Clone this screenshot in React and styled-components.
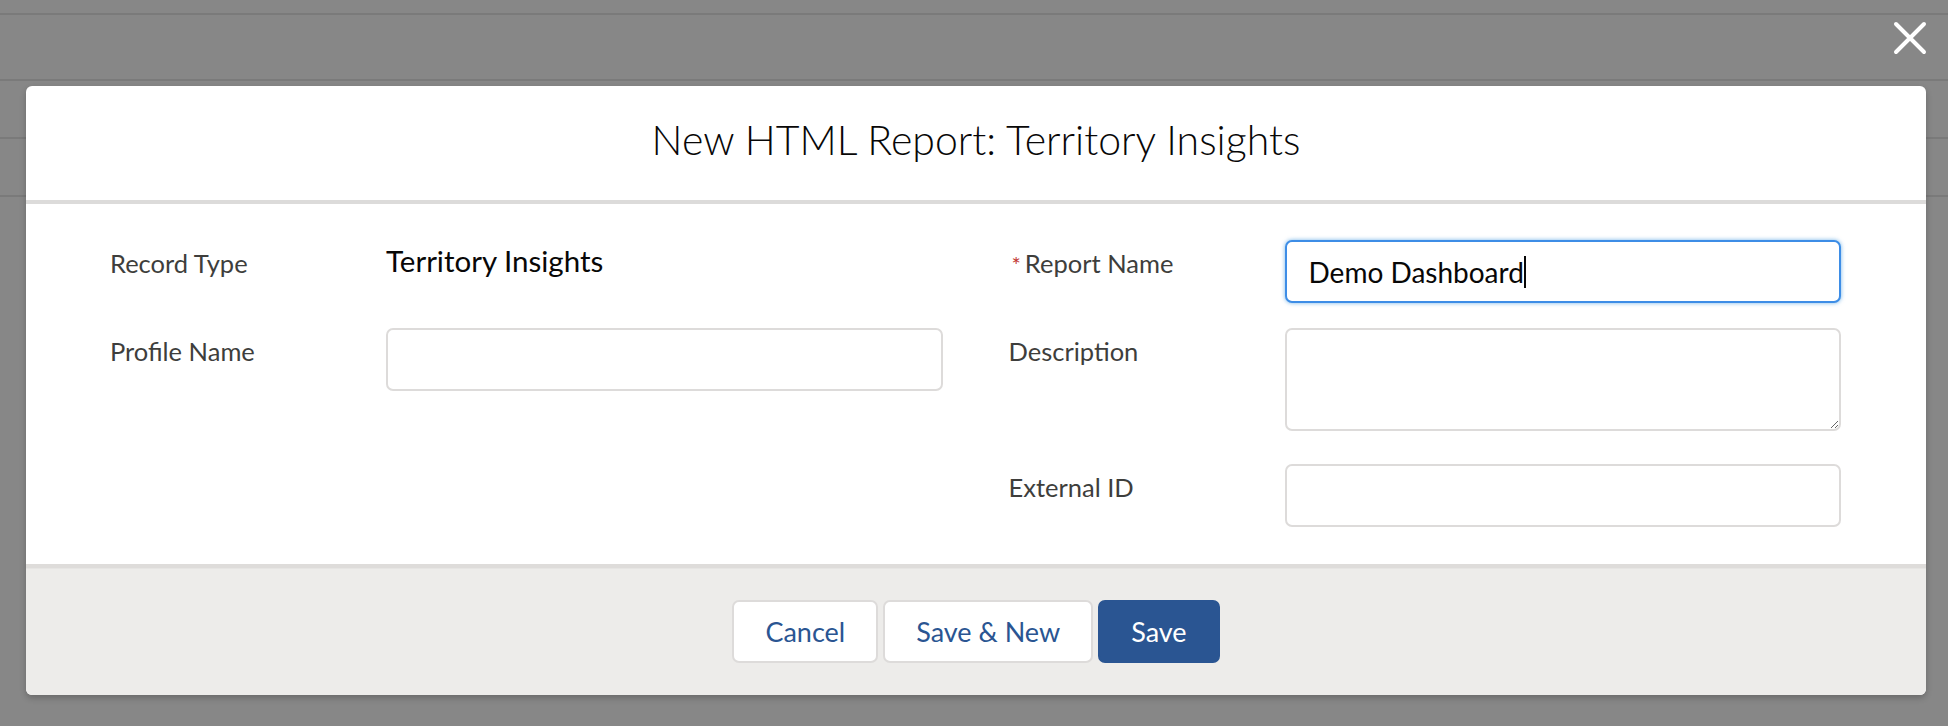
import React from "react";
import styled, { createGlobalStyle } from "styled-components";

const GlobalStyle = createGlobalStyle`
  html, body {
    margin: 0;
    padding: 0;
    background: #878787;
  }
  * {
    box-sizing: border-box;
  }
`;

const Page = styled.div`
  position: relative;
  width: 1948px;
  height: 726px;
  overflow: hidden;
  background: #878787;
  font-family: Lato, "Open Sans", sans-serif;
`;

const Backdrop = styled.div`
  display: flex;
  flex-direction: column;
`;

const BackdropRow = styled.div`
  height: ${(props) => props.h}px;
  border-bottom: 2px solid #7a7a7a;
`;

const Overlay = styled.div`
  position: absolute;
  inset: 0;
  padding: 86px 0 0 26px;
`;

const CloseButton = styled.button`
  position: absolute;
  top: 21px;
  right: 21px;
  width: 34px;
  height: 34px;
  padding: 0;
  border: none;
  background: transparent;
  cursor: pointer;
`;

const Modal = styled.div`
  width: 1900px;
  background: #fff;
  border-radius: 6px;
  box-shadow: 0 3px 6px rgba(0, 0, 0, 0.22);
  overflow: hidden;
`;

const Header = styled.div`
  height: 118px;
  display: flex;
  align-items: center;
  justify-content: center;
  padding-bottom: 6px;
  border-bottom: 4px solid #dcdbda;
`;

const Title = styled.h2`
  margin: 0;
  font-size: 41px;
  font-weight: 300;
  line-height: 1.2;
  color: #080707;
`;

const Body = styled.div`
  display: grid;
  grid-template-columns: 1fr 1fr;
  column-gap: 66px;
  padding: 36px 85px 37px 84px;
`;

const Column = styled.div`
  display: flex;
  flex-direction: column;
`;

const Field = styled.div`
  display: grid;
  grid-template-columns: 276px 1fr;
  align-items: start;
  min-height: 63px;
  margin-bottom: ${(props) => props.gap ?? 25}px;
  &:last-child {
    margin-bottom: 0;
  }
`;

const Label = styled.label`
  padding-top: 5px;
  font-size: 25.5px;
  line-height: 36px;
  color: #3e3e3c;
  white-space: nowrap;
`;

const Required = styled.abbr`
  color: #c23934;
  text-decoration: none;
  margin: 0 4px 0 3px;
  font-size: 22px;
`;

const StaticValue = styled.div`
  padding-top: 3px;
  font-size: 29.5px;
  line-height: 36px;
  color: #080707;
`;

const Input = styled.div`
  height: 63px;
  padding: 0 22px;
  display: flex;
  align-items: center;
  border: 2px solid ${(props) => (props.focused ? "#3d8de6" : "#dddbda")};
  border-radius: 7px;
  background: #fff;
  font-size: 28px;
  color: #080707;
  box-shadow: ${(props) =>
    props.focused ? "0 0 4px rgba(1, 118, 211, 0.55)" : "none"};
`;

const Caret = styled.span`
  display: inline-block;
  width: 2px;
  height: 32px;
  margin-left: 0;
  background: #080707;
`;

const TextArea = styled.textarea`
  display: block;
  width: 100%;
  height: 103px;
  padding: 12px 22px;
  border: 2px solid #dddbda;
  border-radius: 7px;
  font-family: inherit;
  font-size: 28px;
  resize: vertical;
  outline: none;
`;

const Footer = styled.div`
  display: flex;
  justify-content: center;
  gap: 5px;
  padding: 32px 0 32px;
  background: #edecea;
  border-top: 4px solid #dedcda;
  box-shadow: inset 0 1px 0 #e6e5e3;
`;

const Button = styled.button`
  height: 63px;
  padding: 0 31px;
  border: 2px solid ${(props) => (props.brand ? "#2a5592" : "#dddbda")};
  border-radius: 7px;
  background: ${(props) => (props.brand ? "#2a5592" : "#fff")};
  color: ${(props) => (props.brand ? "#fff" : "#2a5592")};
  font-family: inherit;
  font-size: 27px;
  cursor: pointer;
`;

export default function App() {
  return (
    <>
      <GlobalStyle />
      <Page>
        <Backdrop>
          <BackdropRow h={15} />
          <BackdropRow h={66} />
          <BackdropRow h={58} />
          <BackdropRow h={58} />
        </Backdrop>
        <Overlay>
          <CloseButton aria-label="Close">
            <svg width="34" height="34" viewBox="0 0 34 34">
              <path
                d="M3 3 L31 31 M31 3 L3 31"
                stroke="#fff"
                strokeWidth="4"
                strokeLinecap="round"
              />
            </svg>
          </CloseButton>
          <Modal>
            <Header>
              <Title>New HTML Report: Territory Insights</Title>
            </Header>
            <Body>
              <Column>
                <Field>
                  <Label>Record Type</Label>
                  <StaticValue>Territory Insights</StaticValue>
                </Field>
                <Field>
                  <Label>Profile Name</Label>
                  <Input />
                </Field>
              </Column>
              <Column>
                <Field>
                  <Label>
                    <Required title="required">*</Required>Report Name
                  </Label>
                  <Input focused>
                    Demo Dashboard
                    <Caret />
                  </Input>
                </Field>
                <Field gap={33}>
                  <Label>Description</Label>
                  <TextArea />
                </Field>
                <Field>
                  <Label>External ID</Label>
                  <Input />
                </Field>
              </Column>
            </Body>
            <Footer>
              <Button>Cancel</Button>
              <Button>Save &amp; New</Button>
              <Button brand>Save</Button>
            </Footer>
          </Modal>
        </Overlay>
      </Page>
    </>
  );
}
